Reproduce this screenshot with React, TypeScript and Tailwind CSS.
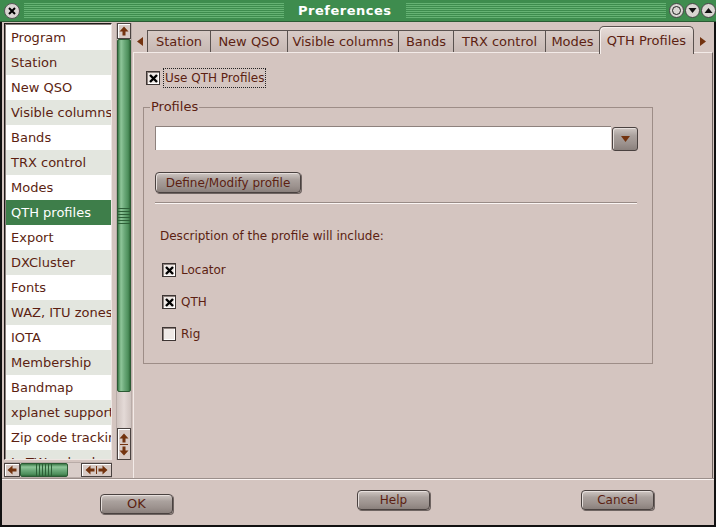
import React from 'react';

const items = [
  'Program',
  'Station',
  'New QSO',
  'Visible columns',
  'Bands',
  'TRX control',
  'Modes',
  'QTH profiles',
  'Export',
  'DXCluster',
  'Fonts',
  'WAZ, ITU zones',
  'IOTA',
  'Membership',
  'Bandmap',
  'xplanet support',
  'Zip code tracking',
  'LoTW upload',
];

const tabs = [
  { label: 'Station', w: 'w-[63px]' },
  { label: 'New QSO', w: 'w-[77px]' },
  { label: 'Visible columns', w: 'w-[111px]' },
  { label: 'Bands', w: 'w-[55px]' },
  { label: 'TRX control', w: 'w-[92px]' },
  { label: 'Modes', w: 'w-[54px]' },
];

const Arrow = ({ dir }: { dir: 'up' | 'down' | 'left' | 'right' }) => {
  const rot = { up: 0, down: 180, left: 270, right: 90 }[dir];
  return (
    <svg width="10" height="10" viewBox="0 0 10 10" style={{ transform: `rotate(${rot}deg)` }}>
      <path d="M5 0.5 L9.5 5.5 L6.5 5.5 L6.5 9.5 L3.5 9.5 L3.5 5.5 L0.5 5.5 Z" fill="#73330f" />
    </svg>
  );
};

const Check = ({ checked }: { checked?: boolean }) => (
  <span className="w-[14px] h-[14px] shrink-0 border border-[#3d3533] bg-[#efe9e6] shadow-[inset_1px_1px_0_#8d827e,inset_-1px_-1px_0_#ffffff] flex items-center justify-center">
    {checked && (
      <svg width="9" height="9" viewBox="0 0 9 9">
        <path d="M1 1 L8 8 M8 1 L1 8" stroke="#000" strokeWidth="2.4" />
      </svg>
    )}
  </span>
);

const Button = ({ children, cls }: { children: React.ReactNode; cls: string }) => (
  <div
    className={`${cls} flex items-center justify-center rounded-[4px] border border-[#4a4240] bg-[linear-gradient(#cfc7c3,#aaa19d_35%,#9c928e_70%,#8a807c)] shadow-[inset_1px_1px_0_#e6dfdc,1px_1px_0_#6f6562]`}
  >
    {children}
  </div>
);

const TitleBar = () => (
  <div className="h-[22px] flex items-center bg-[#3e8c4e] border-b border-[#2a5a33]">
    <div className="ml-[4px] w-[16px] h-[16px] rounded-full bg-[#d9d6d2] border border-[#555] flex items-center justify-center">
      <svg width="8" height="8" viewBox="0 0 8 8">
        <path d="M1 1 L7 7 M7 1 L1 7" stroke="#000" strokeWidth="2" />
      </svg>
    </div>
    <div className="ml-[4px] w-[266px] h-[15px] bg-[repeating-linear-gradient(to_bottom,#66b274_0_1px,#3e8c4e_1px_2px)]" />
    <div className="w-[125px] text-center text-white font-bold text-[13px] tracking-[0.5px]">Preferences</div>
    <div className="w-[266px] h-[15px] bg-[repeating-linear-gradient(to_bottom,#66b274_0_1px,#3e8c4e_1px_2px)]" />
    <div className="ml-[3px] flex gap-[1px]">
      <div className="w-[15px] h-[15px] rounded-full bg-[#d9d6d2] border border-[#444] flex items-center justify-center">
        <div className="w-[9px] h-[9px] rounded-full border border-[#222]" />
      </div>
      <div className="w-[15px] h-[15px] rounded-full bg-[#d9d6d2] border border-[#444] flex items-center justify-center">
        <svg width="9" height="9" viewBox="0 0 9 9">
          <path d="M0.5 2 L8.5 2 L4.5 7 Z" fill="#111" />
        </svg>
      </div>
      <div className="w-[15px] h-[15px] rounded-full bg-[#d9d6d2] border border-[#444] flex items-center justify-center">
        <svg width="9" height="9" viewBox="0 0 9 9">
          <path d="M0.5 7 L8.5 7 L4.5 2 Z" fill="#111" />
        </svg>
      </div>
    </div>
  </div>
);

const LeftColumn = () => (
  <div className="ml-[2px] pt-[1px] flex flex-col">
    <div className="flex">
      {/* list */}
      <div className="w-[108px] h-[437px] border border-[#1e1a19] border-r-[#eee6e3] border-b-[#eee6e3] overflow-hidden bg-white">
        <div className="border-l border-t border-[#8a807c] h-full overflow-hidden">
          {items.map((it, i) => (
            <div
              key={it}
              className={`h-[25px] pl-[5px] flex items-center text-[13px] whitespace-nowrap overflow-hidden ${
                i === 7 ? 'bg-[#3e7e4a] text-white' : i % 2 === 1 ? 'bg-[#e3e6df]' : 'bg-white'
              }`}
            >
              {it}
            </div>
          ))}
        </div>
      </div>
      {/* vertical scrollbar */}
      <div className="ml-[4px] w-[16px] h-[437px] flex flex-col bg-[#d9cdc9] border-x border-[#b9aca8]">
        <div className="h-[16px] border border-[#4a4240] bg-[#d7cac5] shadow-[inset_1px_1px_0_#fff] flex items-center justify-center">
          <Arrow dir="up" />
        </div>
        <div className="h-[353px] border border-[#2b5a34] rounded-[2px] bg-[linear-gradient(to_right,#3c7a48,#8fc79a_25%,#6aa878_55%,#4d8f5b_85%,#2f6a3a)] flex items-center justify-center">
          <div className="flex flex-col gap-[2px]">
            {[0, 1, 2, 3, 4, 5].map((k) => (
              <div key={k} className="w-[12px] h-[1px] bg-[#2d5f37]" />
            ))}
          </div>
        </div>
        <div className="flex-1 bg-[linear-gradient(to_right,#cfc3bf,#e4dad7_50%,#cfc3bf)]" />
        <div className="h-[32px] border border-[#4a4240] bg-[#d7cac5] shadow-[inset_1px_1px_0_#fff] flex flex-col items-center justify-center">
          <Arrow dir="up" />
          <div className="w-[8px] h-[1px] bg-[#73330f] my-[1px]" />
          <Arrow dir="down" />
        </div>
      </div>
    </div>
    {/* horizontal scrollbar */}
    <div className="mt-[2px] w-[108px] h-[16px] flex bg-[#d9cdc9] border-y border-[#b9aca8]">
      <div className="w-[16px] border border-[#4a4240] bg-[#d7cac5] shadow-[inset_1px_1px_0_#fff] flex items-center justify-center">
        <Arrow dir="left" />
      </div>
      <div className="w-[48px] border border-[#2b5a34] rounded-[2px] bg-[linear-gradient(to_bottom,#3c7a48,#8fc79a_25%,#6aa878_55%,#4d8f5b_85%,#2f6a3a)] flex items-center justify-center">
        <div className="flex gap-[2px]">
          {[0, 1, 2, 3, 4, 5].map((k) => (
            <div key={k} className="w-[1px] h-[12px] bg-[#2d5f37]" />
          ))}
        </div>
      </div>
      <div className="w-[13px]" />
      <div className="w-[31px] border border-[#4a4240] bg-[#d7cac5] shadow-[inset_1px_1px_0_#fff] flex items-center justify-center gap-[1px]">
        <Arrow dir="left" />
        <div className="w-[1px] h-[8px] bg-[#73330f]" />
        <Arrow dir="right" />
      </div>
    </div>
  </div>
);

const RightPanel = () => (
  <div className="ml-[1px] w-[580px] flex flex-col">
    {/* tab strip */}
    <div className="h-[30px] flex items-end">
      <div className="w-[14px] h-[22px] flex items-center justify-center">
        <svg width="6" height="9" viewBox="0 0 6 9">
          <path d="M6 0 L0 4.5 L6 9 Z" fill="#73330f" />
        </svg>
      </div>
      {tabs.map((t) => (
        <div
          key={t.label}
          className={`${t.w} h-[22px] border-t border-l border-[#5a524f] bg-[linear-gradient(#d8cbc6,#c6b8b3)] flex items-center justify-center text-[13px] whitespace-nowrap`}
        >
          {t.label}
        </div>
      ))}
      <div className="relative z-10 -mb-[2px] w-[95px] h-[28px] rounded-t-[5px] border border-b-0 border-[#5a524f] bg-[linear-gradient(#e6dcd8,#d4c5c0_60%)] shadow-[inset_1px_1px_0_#f6efec] flex items-start pt-[4px] justify-center text-[13px] whitespace-nowrap">
        QTH Profiles
      </div>
      <div className="w-[18px] h-[22px] flex items-center justify-center">
        <svg width="6" height="9" viewBox="0 0 6 9">
          <path d="M0 0 L6 4.5 L0 9 Z" fill="#73330f" />
        </svg>
      </div>
    </div>
    {/* panel */}
    <div className="h-[427px] border border-[#f3ebe8] border-r-[#6f6461] border-b-[#6f6461] pl-[12px] pt-[15px] text-[12px]">
      <div className="flex items-center">
        <Check checked />
        <span className="ml-[3px] px-[1px] border border-dotted border-[#222]">Use QTH Profiles</span>
      </div>
      <fieldset className="mt-[12px] -ml-[3px] w-[510px] h-[264px] border border-[#9d8d87] p-0">
        <legend className="ml-[6px] px-[1px] text-[13px] leading-[14px]">Profiles</legend>
        <div className="ml-[11px]">
          <div className="mt-[12px] flex items-start">
            <div className="w-[456px] h-[24px] bg-white border-t border-l border-[#8d817d]" />
            <div className="ml-[1px] mt-[1px] w-[26px] h-[24px] rounded-[3px] border border-[#4a4240] bg-[linear-gradient(#cfc7c3,#aaa19d_35%,#9c928e_70%,#8a807c)] shadow-[inset_1px_1px_0_#e6dfdc] flex items-center justify-center">
              <svg width="9" height="6" viewBox="0 0 9 6">
                <path d="M0 0 L9 0 L4.5 6 Z" fill="#73330f" />
              </svg>
            </div>
          </div>
          <Button cls="mt-[21px] w-[146px] h-[21px] text-[12px]">Define/Modify profile</Button>
          <div className="mt-[9px] w-[482px] h-[2px] border-t border-[#988b86] border-b border-b-[#fbf6f4]" />
          <div className="mt-[25px] ml-[5px] leading-[14px]">Description of the profile will include:</div>
          <div className="mt-[18px] ml-[7px] flex flex-col gap-[14px]">
            <div className="flex items-center">
              <Check checked />
              <span className="ml-[5px]">Locator</span>
            </div>
            <div className="flex items-center">
              <Check checked />
              <span className="ml-[5px]">QTH</span>
            </div>
            <div className="flex items-center">
              <Check />
              <span className="ml-[5px]">Rig</span>
            </div>
          </div>
        </div>
      </fieldset>
    </div>
  </div>
);

export default function App() {
  return (
    <div className="w-[716px] h-[527px] flex flex-col overflow-hidden bg-[#d4c5c0] text-[#5c1f12] font-['DejaVu_Sans',sans-serif]">
      <TitleBar />
      <div className="flex-1 flex flex-col border-x-2 border-b-2 border-[#111]">
        <div className="h-[457px] flex">
          <LeftColumn />
          <RightPanel />
        </div>
        <div className="flex-1 border-t border-[#fbf5f3] shadow-[0_-1px_0_#9b8f8b] flex items-start text-[12px]">
          <Button cls="ml-[98px] mt-[14px] w-[73px] h-[20px] text-[13px]">OK</Button>
          <Button cls="ml-[184px] mt-[10px] w-[73px] h-[20px]">Help</Button>
          <Button cls="ml-[151px] mt-[10px] w-[73px] h-[20px]">Cancel</Button>
        </div>
      </div>
    </div>
  );
}
